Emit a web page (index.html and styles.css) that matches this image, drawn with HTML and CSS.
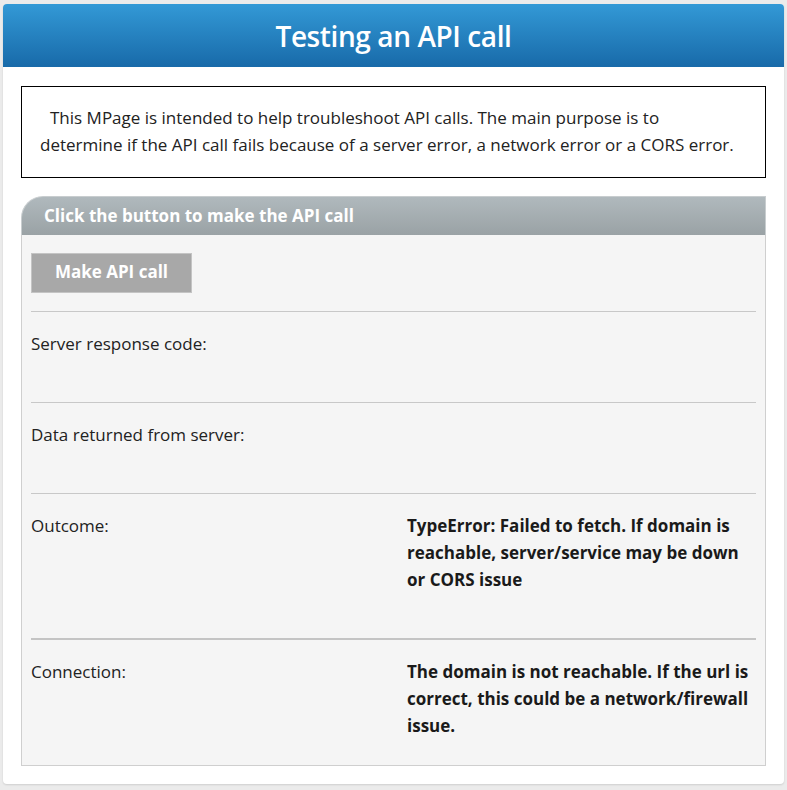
FILE: index.html
```html
<!DOCTYPE html>
<html>
<head>
<meta charset="utf-8">
<title>Testing an API call</title>
<link rel="stylesheet" href="styles.css">
</head>
<body>
<div class="card">
  <header class="banner"><h1>Testing an API call</h1></header>
  <div class="content">
    <div class="intro">
      <p>This MPage is intended to help troubleshoot API calls. The main purpose is to<br>determine if the API call fails because of a server error, a network error or a CORS error.</p>
    </div>
    <section class="panel">
      <div class="panel-head">Click the button to make the API call</div>
      <div class="panel-body">
        <button class="btn" type="button">Make API call</button>
        <div class="row">
          <div class="label">Server response code:</div>
          <div class="value"></div>
        </div>
        <div class="row">
          <div class="label">Data returned from server:</div>
          <div class="value"></div>
        </div>
        <div class="row">
          <div class="label">Outcome:</div>
          <div class="value">TypeError: Failed to fetch. If domain is reachable, server/service may be down or CORS issue</div>
        </div>
        <div class="row row-thick row-last">
          <div class="label">Connection:</div>
          <div class="value">The domain is not reachable. If the url is correct, this could be a network/firewall issue.</div>
        </div>
      </div>
    </section>
  </div>
</div>
</body>
</html>
```

FILE: styles.css
```css
html, body {
  margin: 0;
  padding: 0;
}
body {
  background: #ebebeb;
  font-family: "Open Sans", "Noto Sans", sans-serif;
  color: #222;
  padding: 4px 3px 6px 3px;
}
.card {
  background: #fff;
  border-radius: 4px;
  box-shadow: 0 1px 2px rgba(0,0,0,0.12);
  overflow: hidden;
  padding-bottom: 18px;
}
.banner {
  height: 63px;
  background: linear-gradient(#3399d6, #186aa9);
  display: flex;
  align-items: center;
  justify-content: center;
}
.banner h1 {
  margin: 0;
  color: #fff;
  font-size: 28px;
  font-weight: 600;
  letter-spacing: -0.4px;
}
.content {
  padding: 19px 18px 0 18px;
}
.intro {
  border: 1px solid #000;
  height: 92px;
  box-sizing: border-box;
  padding: 17px 18px 0 18px;
}
.intro p {
  margin: 0;
  font-size: 17px;
  line-height: 27px;
  text-indent: 10px;
  color: #222;
  white-space: nowrap;
}
.panel {
  margin-top: 18px;
}
.panel-head {
  height: 39px;
  box-sizing: border-box;
  background: linear-gradient(#b0b9bd, #9aa2a5);
  border-top-left-radius: 22px;
  border: 1px solid #c8cdcf;
  border-bottom: none;
  color: #fff;
  font-weight: 700;
  font-size: 17px;
  padding: 7px 0 0 22px;
}
.panel-body {
  background: #f5f5f5;
  border: 1px solid #cfcfcf;
  border-top: none;
  padding: 18px 9px 0 9px;
}
.btn {
  display: block;
  width: 161px;
  height: 40px;
  background: #a8a8a8;
  border: 1px solid #c4c4c4;
  color: #fff;
  font-family: inherit;
  font-weight: 700;
  font-size: 17px;
  line-height: 36px;
  margin-bottom: 18px;
  padding: 0 0 2px 0;
  cursor: pointer;
}
.row {
  display: grid;
  grid-template-columns: 376px 1fr;
  border-top: 1px solid #c8c8c8;
  padding: 18px 0 45px 0;
  font-size: 17px;
  line-height: 27px;
  min-height: 27px;
}
.row-thick {
  border-top: 2px solid #c4c4c4;
}
.row-last {
  padding-bottom: 26px;
}
.value {
  font-weight: 700;
  color: #1a1a1a;
}
```
